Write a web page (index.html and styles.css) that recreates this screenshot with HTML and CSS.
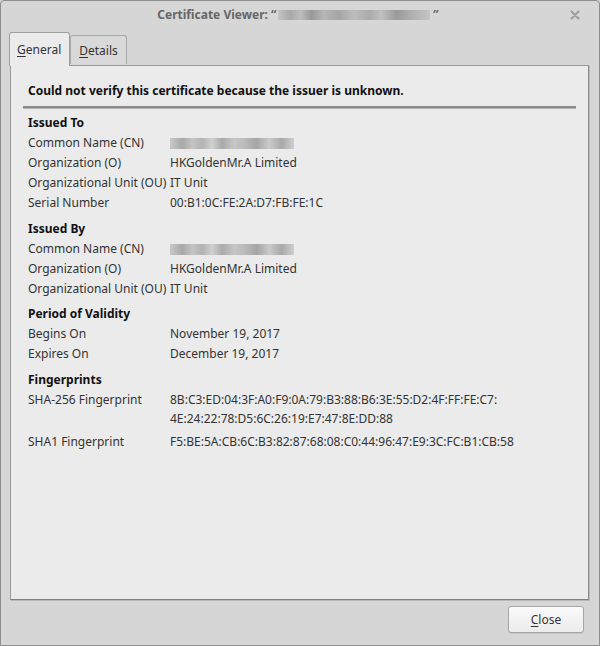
FILE: index.html
```html
<!DOCTYPE html>
<html>
<head>
<meta charset="utf-8">
<link rel="stylesheet" href="styles.css">
</head>
<body>
<div class="window">
  <div class="titlebar">
    <span class="title">Certificate Viewer: “<span class="blur blur-title"></span>”</span>
    <svg class="close-x" width="10" height="10" viewBox="0 0 10 10"><path d="M1.5 1.5 L8.5 8.5 M8.5 1.5 L1.5 8.5" stroke="#a0a0a0" stroke-width="2.2" stroke-linecap="round"/></svg>
  </div>
  <div class="tabs">
    <div class="tab active"><u>G</u>eneral</div>
    <div class="tab"><u>D</u>etails</div>
  </div>
  <div class="notebook">
    <div class="content">
      <div class="warning">Could not verify this certificate because the issuer is unknown.</div>
      <div class="sep"></div>
      <div class="section">
        <div class="sec-title">Issued To</div>
        <div class="grid">
          <div class="label">Common Name (CN)</div><div class="value"><span class="blur blur-cn"></span></div>
          <div class="label">Organization (O)</div><div class="value">HKGoldenMr.A Limited</div>
          <div class="label">Organizational Unit (OU)</div><div class="value">IT Unit</div>
          <div class="label">Serial Number</div><div class="value">00:B1:0C:FE:2A:D7:FB:FE:1C</div>
        </div>
      </div>
      <div class="section">
        <div class="sec-title">Issued By</div>
        <div class="grid">
          <div class="label">Common Name (CN)</div><div class="value"><span class="blur blur-cn"></span></div>
          <div class="label">Organization (O)</div><div class="value">HKGoldenMr.A Limited</div>
          <div class="label">Organizational Unit (OU)</div><div class="value">IT Unit</div>
        </div>
      </div>
      <div class="section tight">
        <div class="sec-title">Period of Validity</div>
        <div class="grid">
          <div class="label">Begins On</div><div class="value">November 19, 2017</div>
          <div class="label">Expires On</div><div class="value">December 19, 2017</div>
        </div>
      </div>
      <div class="section">
        <div class="sec-title">Fingerprints</div>
        <div class="grid">
          <div class="label">SHA-256 Fingerprint</div><div class="value multi">8B:C3:ED:04:3F:A0:F9:0A:79:B3:88:B6:3E:55:D2:4F:FF:FE:C7:<br>4E:24:22:78:D5:6C:26:19:E7:47:8E:DD:88</div>
          <div class="label">SHA1 Fingerprint</div><div class="value">F5:BE:5A:CB:6C:B3:82:87:68:08:C0:44:96:47:E9:3C:FC:B1:CB:58</div>
        </div>
      </div>
    </div>
  </div>
  <div class="footer">
    <button class="btn"><u>C</u>lose</button>
  </div>
</div>
</body>
</html>
```
FILE: styles.css
```css
* { box-sizing: border-box; }
html, body { margin: 0; padding: 0; background: #d6d6d6; }
body {
  font-family: "Noto Sans", "Open Sans", sans-serif;
  font-size: 12px;
  color: #2e2e2e;
}
.window {
  width: 600px;
  height: 646px;
  border: 1px solid #8e8e8e;
  border-radius: 4px 4px 0 0;
  background: #d6d6d6;
  display: flex;
  flex-direction: column;
}
.titlebar {
  height: 32px;
  position: relative;
  display: flex;
  align-items: center;
  justify-content: center;
  padding-bottom: 5px;
}
.title {
  font-weight: bold;
  color: #666;
  font-size: 12px;
  display: flex;
  align-items: center;
  margin-right: 4px;
}
.blur {
  display: inline-block;
  height: 10px;
}
.blur-title {
  width: 152px;
  margin: 0 3px 0 2px;
  background: linear-gradient(90deg, #c4c4c4 0, #a9a9a9 8%, #bdbdbd 15%, #999 22%, #b5b5b5 30%, #a5a5a5 40%, #bcbcbc 50%, #ababab 60%, #c0c0c0 68%, #9a9a9a 78%, #b0b0b0 88%, #c5c5c5 100%);
}
.close-x {
  position: absolute;
  right: 19px;
  top: 9px;
}
.tabs {
  display: flex;
  align-items: flex-end;
  padding-left: 8px;
  height: 34px;
  margin-top: -2px;
  position: relative;
  z-index: 2;
}
.tab {
  height: 29px;
  padding: 0 8px;
  border: 1px solid #a8a8a8;
  border-bottom: none;
  border-radius: 3px 3px 0 0;
  background: #d9d9d9;
  display: flex;
  align-items: center;
  color: #333;
  margin-bottom: 1px;
}
.tab.active {
  height: 34px;
  background: #ebebeb;
  border-color: #a0a0a0;
  margin-bottom: -1px;
  padding-left: 7px;
}
.notebook {
  margin: 0 10px 0 9px;
  height: 535px;
  background: #ebebeb;
  border: 1px solid #9a9a9a;
  border-right-color: #8a8a8a;
  border-bottom-color: #7f7f7f;
  box-shadow: 1px 1px 0 #b8b8b8;
  position: relative;
  z-index: 1;
}
.content {
  padding: 16px 12px 0 12px;
}
.warning {
  font-weight: bold;
  color: #111;
  padding-left: 5px;
  line-height: 18px;
}
.sep {
  background: #8a8a8a;
  border-bottom: 1px solid #b0b0b0;
  margin-top: 6px;
  height: 3px;
  background-clip: padding-box;
}
.section {
  padding-left: 5px;
  margin-top: 4px;
}
.section + .section { margin-top: 6px; }
.section.tight { margin-top: 5px; }
.sec-title {
  font-weight: bold;
  color: #111;
  line-height: 20px;
}
.grid {
  display: grid;
  grid-template-columns: 142px auto;
  line-height: 20px;
  color: #333;
}
.value.multi {
  line-height: 19px;
  padding-bottom: 4px;
}
.blur-cn {
  width: 124px;
  height: 11px;
  vertical-align: middle;
  background: linear-gradient(90deg, #c8c8c8 0, #a8a8a8 10%, #c4c4c4 18%, #b3b3b3 26%, #d0d0d0 34%, #aaaaaa 42%, #c6c6c6 52%, #bbbbbb 60%, #a5a5a5 70%, #cacaca 80%, #a9a9a9 90%, #cfcfcf 100%);
}
.footer {
  flex: 1;
  display: flex;
  justify-content: flex-end;
  align-items: flex-start;
  padding: 6px 15px 0 0;
}
.btn {
  width: 76px;
  height: 27px;
  font-family: inherit;
  font-size: 12px;
  color: #333;
  border: 1px solid #a5a5a5;
  border-radius: 3px;
  background: linear-gradient(#fafafa, #ececec);
  box-shadow: 0 1px 0 #c8c8c8;
  padding: 0;
}
u { text-decoration-thickness: 1px; text-underline-offset: 2px; }
```
